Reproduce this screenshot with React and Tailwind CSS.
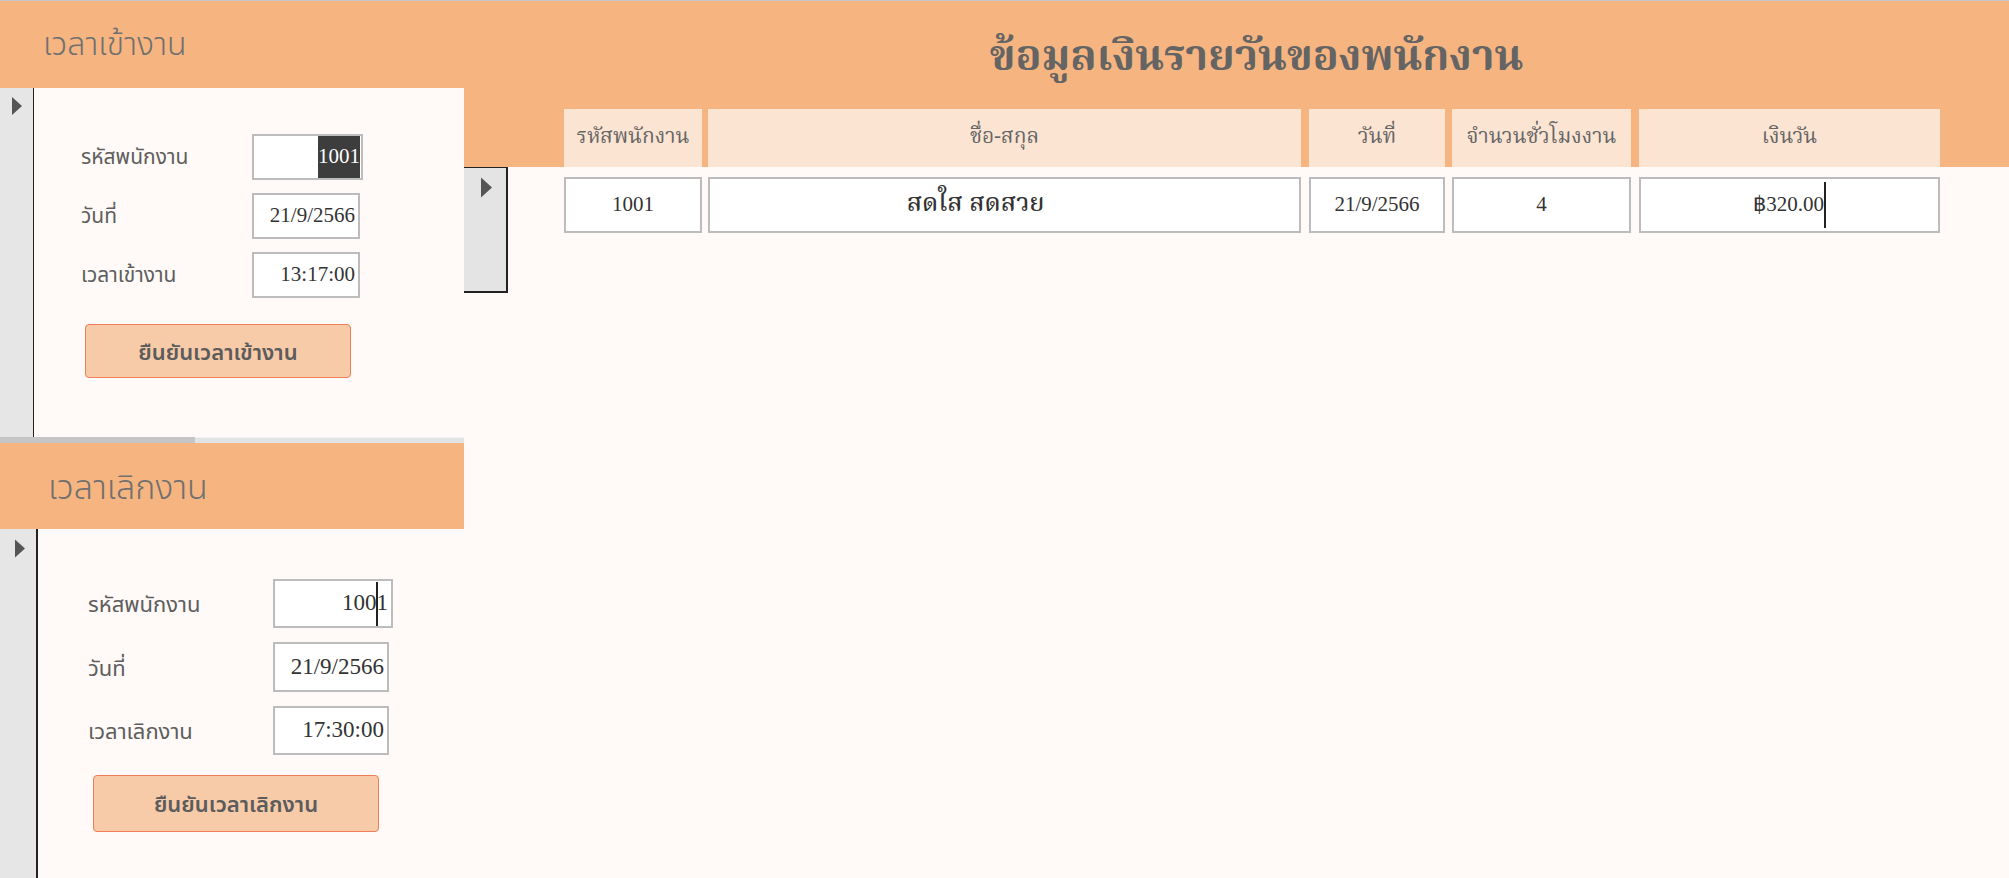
import React from 'react';

const thai = "font-['Noto_Sans','Liberation_Sans','Noto_Sans_Thai','Tahoma',sans-serif]";
const thaiLoop = "font-['Noto_Serif_Thai','Noto_Sans_Thai_Looped','Liberation_Serif','Noto_Sans_Thai',serif]";

const Arrow = ({ w = 10, h = 18 }) => (
  <svg width={w} height={h} viewBox="0 0 10 18">
    <path d="M0 0 L10 9 L0 18 Z" fill="#555555" />
  </svg>
);

const Field = ({ className, children }) => (
  <div
    className={`flex items-center justify-end bg-white border-2 border-[#bcbcbc] pr-[3px] font-['Liberation_Serif',serif] text-[#333] ${className}`}
  >
    {children}
  </div>
);

const Button = ({ className, children }) => (
  <div
    className={`flex items-center justify-center bg-[#f8cba8] border-[1.5px] border-[#ee7d58] rounded-[4px] text-[#5c5c5c] font-semibold ${className}`}
  >
    {children}
  </div>
);

const StartPanel = () => (
  <>
    <div className="h-[87px] bg-[#f6b580] flex items-center pl-[43px]">
      <span className={`${thai} text-[32px] font-light text-[#707070] -mt-[4px]`}>เวลาเข้างาน</span>
    </div>
    <div className="h-[349px] flex">
      <div className="w-[34px] bg-[#e6e6e6] border-r border-[#222] pl-[12px] pt-[9px]">
        <Arrow />
      </div>
      <div className={`flex-1 bg-[#fffaf7] pl-[47px] pt-[46px] ${thai} text-[#5e5e5e]`}>
        <div className="flex items-center">
          <span className="w-[171px] text-[21px]">รหัสพนักงาน</span>
          <Field className="w-[111px] h-[46px] text-[21px] !pr-[1px]">
            <span className="bg-[#3d3d3d] text-white h-[42px] flex items-center">1001</span>
          </Field>
        </div>
        <div className="flex items-center mt-[13px]">
          <span className="w-[171px] text-[21px]">วันที่</span>
          <Field className="w-[108px] h-[46px] text-[21px]">21/9/2566</Field>
        </div>
        <div className="flex items-center mt-[13px]">
          <span className="w-[171px] text-[21px]">เวลาเข้างาน</span>
          <Field className="w-[108px] h-[46px] text-[21px]">13:17:00</Field>
        </div>
        <Button className="ml-[4px] mt-[26px] w-[266px] h-[54px] text-[22px]">ยืนยันเวลาเข้างาน</Button>
      </div>
    </div>
  </>
);

const EndPanel = () => (
  <>
    <div className="h-[6px] flex">
      <div className="w-[195px] bg-[#c5c5c5]" />
      <div className="flex-1 bg-[#e1e3e5] border-t border-[#f3f3f3]" />
    </div>
    <div className="h-[86px] bg-[#f6b580] flex items-center pl-[48px]">
      <span className={`${thai} text-[34px] font-light text-[#707070]`}>เวลาเลิกงาน</span>
    </div>
    <div className="flex-1 flex">
      <div className="w-[38px] bg-[#e6e6e6] border-r-2 border-[#222] pl-[15px] pt-[10px]">
        <Arrow w={10} h={19} />
      </div>
      <div className={`flex-1 bg-[#fffaf7] pl-[50px] pt-[50px] ${thai} text-[#5e5e5e]`}>
        <div className="flex items-center">
          <span className="w-[185px] text-[22px]">รหัสพนักงาน</span>
          <Field className="w-[120px] h-[49px] text-[23px]">
            100<span className="w-[2px] h-[44px] bg-[#222] -mx-px" />1
          </Field>
        </div>
        <div className="flex items-center mt-[14px]">
          <span className="w-[185px] text-[22px]">วันที่</span>
          <Field className="w-[116px] h-[50px] text-[23px]">21/9/2566</Field>
        </div>
        <div className="flex items-center mt-[14px]">
          <span className="w-[185px] text-[22px]">เวลาเลิกงาน</span>
          <Field className="w-[116px] h-[49px] text-[23px]">17:30:00</Field>
        </div>
        <Button className="ml-[5px] mt-[20px] w-[286px] h-[57px] text-[22px]">ยืนยันเวลาเลิกงาน</Button>
      </div>
    </div>
  </>
);

const columns = [
  { title: 'รหัสพนักงาน', value: '1001', w: 'w-[138px]', gap: '' },
  { title: 'ชื่อ-สกุล', value: 'สดใส สดสวย', w: 'w-[593px]', gap: 'ml-[6px]' },
  { title: 'วันที่', value: '21/9/2566', w: 'w-[136px]', gap: 'ml-[8px]' },
  { title: 'จำนวนชั่วโมงงาน', value: '4', w: 'w-[179px]', gap: 'ml-[7px]' },
  { title: 'เงินวัน', value: '฿320.00', w: 'w-[301px]', gap: 'ml-[8px]' },
];

const MainForm = () => (
  <div className="flex-1 flex flex-col">
    <div className="h-[166px] bg-[#f6b580] flex flex-col">
      <div className="h-[109px] flex justify-center pl-[40px] pt-[36px]">
        <h1 className={`${thaiLoop} text-[43px] font-bold text-[#646464] leading-none`}>ข้อมูลเงินรายวันของพนักงาน</h1>
      </div>
      <div className="flex pl-[100px]">
        {columns.map((c) => (
          <div
            key={c.title}
            className={`${c.w} ${c.gap} h-[58px] bg-[#fce4d3] flex items-center justify-center ${thaiLoop} text-[21px] text-[#666]`}
          >
            {c.title}
          </div>
        ))}
      </div>
    </div>
    <div className="flex-1 flex bg-[#fffaf7]">
      <div className="w-[44px] h-[126px] bg-[#e4e4e4] border-t border-r-2 border-b-2 border-[#222] pl-[17px] pt-[9px]">
        <Arrow w={11} h={21} />
      </div>
      <div className="flex pl-[56px] pt-[10px]">
        {columns.map((c, i) => (
          <div
            key={c.title}
            className={`${c.w} ${c.gap} h-[56px] bg-white border-2 border-[#bcbcbc] flex items-center justify-center text-[21px] text-[#333] ${
              i === 1 ? `${thaiLoop} font-medium text-[25px] pr-[58px]` : "font-['Liberation_Serif',serif]"
            }`}
          >
            {c.value}
            {i === 4 && <span className="w-[2px] h-[46px] bg-[#222]" />}
          </div>
        ))}
      </div>
    </div>
  </div>
);

export default function App() {
  return (
    <div className="w-[2009px] h-[878px] overflow-hidden flex flex-col bg-[#fffaf7]">
      <div className="h-px bg-[#c3c8cd]" />
      <div className="flex flex-1">
        <div className="w-[464px] flex flex-col">
          <StartPanel />
          <EndPanel />
        </div>
        <MainForm />
      </div>
    </div>
  );
}
